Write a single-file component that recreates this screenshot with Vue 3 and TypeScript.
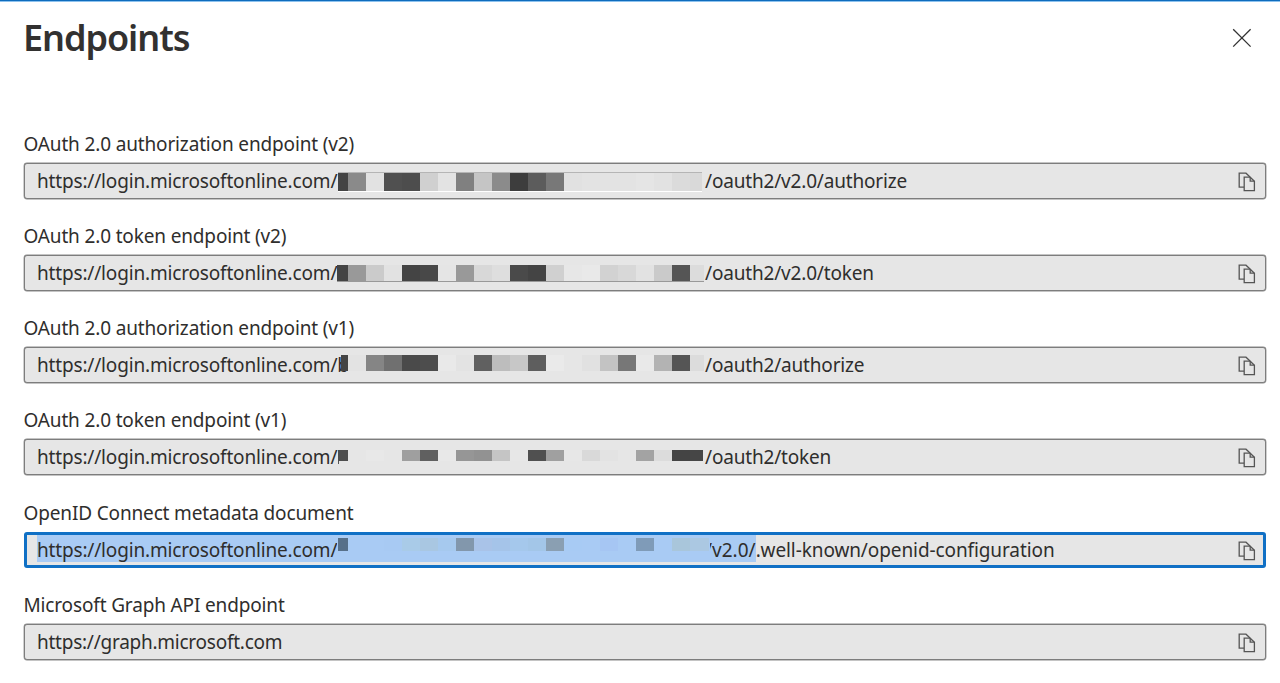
<script setup lang="ts">
interface Mosaic {
  first: number
  last: number
  top: number
  height: number
  gap: number
  tones: string[]
  edge?: string
}
interface Endpoint {
  label: string
  prefix: string
  suffix?: string
  selected?: string
  mosaic?: Mosaic
}

const host = 'https://login.microsoftonline.com/'

const greys = (list: string): string[] => list.split(' ').map((v) => '#' + v + v + v)

const endpoints: Endpoint[] = [
  {
    label: 'OAuth 2.0 authorization endpoint (v2)',
    prefix: host,
    suffix: '/oauth2/v2.0/authorize',
    mosaic: {
      first: 10, last: 12, top: 9, height: 18, gap: 1, edge: 'framed',
      tones: greys('44 8a e2 50 4d d0 e3 80 c5 8b 3d 5c 78 e1 e3 e3 e3 e5 e2 db d9'),
    },
  },
  {
    label: 'OAuth 2.0 token endpoint (v2)',
    prefix: host,
    suffix: '/oauth2/v2.0/token',
    mosaic: {
      first: 11, last: 14, top: 9, height: 16, gap: 0, edge: 'underlined',
      tones: greys('44 99 cb e2 44 48 e5 99 d8 de 4a 44 d0 e7 e9 d2 d8 e2 ca 55 dc'),
    },
  },
  {
    label: 'OAuth 2.0 authorization endpoint (v1)',
    prefix: host + 'b',
    suffix: '/oauth2/authorize',
    mosaic: {
      first: 7, last: 14, top: 7, height: 16, gap: 4,
      tones: greys('44 e3 85 70 4a 4d e9 e3 60 bd c7 5e ea e6 e1 c3 77 e9 b3 55 dc'),
    },
  },
  {
    label: 'OAuth 2.0 token endpoint (v1)',
    prefix: host,
    suffix: '/oauth2/token',
    mosaic: {
      first: 10, last: 13, top: 10, height: 11, gap: 1, edge: 'stemmed',
      tones: greys('4e e6 e8 e6 9f 60 e8 96 92 c5 e7 50 a0 e7 d9 e3 e6 a3 dc 44 46'),
    },
  },
  {
    label: 'OpenID Connect metadata document',
    prefix: host,
    selected: '/v2.0/',
    suffix: '.well-known/openid-configuration',
    mosaic: {
      first: 10, last: 19, top: 3, height: 13, gap: 1,
      tones: [
        '#577089', '#a9cbf4', '#a9cbf4', '#a8caf3', '#a9cbe8', '#a9c7e2', '#a6c9ee',
        '#8297ac', '#a9c3e8', '#a5c4e9', '#a5c8ec', '#a9cbf4', '#a3c6e8', '#8a9fb2',
        '#a8cbf4', '#a9cbf4', '#a6c6f3', '#a9cbf4', '#7f9bb8', '#a9cbf4', '#a9c6db',
        '#abc8e2',
      ].filter((_, i) => i !== 11),
    },
  },
  { label: 'Microsoft Graph API endpoint', prefix: 'https://graph.microsoft.com' },
]

function cellWidth(m: Mosaic, i: number): string {
  if (i === 0) return m.first + 'px'
  if (i === m.tones.length - 1) return m.last + 'px'
  return '18px'
}
</script>

<template>
  <main class="panel">
    <header class="head">
      <h1>Endpoints</h1>
      <button class="close" aria-label="Close">
        <svg width="20" height="20" viewBox="0 0 20 20"><path d="M1.2 1.2 18.6 18.6M18.6 1.2 1.2 18.6" /></svg>
      </button>
    </header>
    <section class="list">
      <div v-for="e in endpoints" :key="e.label" class="item">
        <div class="label">{{ e.label }}</div>
        <div class="field" :class="{ focused: e.selected }">
          <div class="value">
            <span class="prefix" :class="{ marked: e.selected, fixed: e.mosaic }">{{ e.prefix }}</span>
            <span v-if="e.mosaic" class="redacted" :class="{ marked: e.selected }">
              <span
                class="mosaic"
                :class="e.mosaic.edge"
                :style="{ marginTop: e.mosaic.top + 'px', marginLeft: e.mosaic.gap + 'px', height: e.mosaic.height + 'px' }"
              >
                <i
                  v-for="(t, i) in e.mosaic.tones"
                  :key="i"
                  :style="{ width: cellWidth(e.mosaic, i), background: t }"
                ></i>
              </span>
            </span>
            <span v-if="e.selected" class="marked version">{{ e.selected }}</span>
            <span class="suffix">{{ e.suffix }}</span>
          </div>
          <button class="copy" aria-label="Copy to clipboard">
            <svg width="18" height="20" viewBox="0 0 18 20">
              <path d="M6 15.2H1.2V1.2H8L12 5" />
              <path d="M6.2 5.2H12.2L16.4 9.2V18.6H6.2Z" />
              <path d="M12.2 5.2V9.2H16.4" />
            </svg>
          </button>
        </div>
      </div>
    </section>
  </main>
</template>

<style>
body {
  margin: 0;
  background: #fff;
}
</style>

<style scoped>
.panel {
  box-sizing: border-box;
  height: 683px;
  overflow: hidden;
  border-top: 1px solid #0f6cbd;
  box-shadow: inset 0 1px #8dc2ee;
  background: #fff;
  color: #2f2e2d;
  font-family: "Noto Sans", "Open Sans", sans-serif;
  font-size: 19px;
}
.head {
  display: flex;
  justify-content: space-between;
  box-sizing: border-box;
  height: 128.6px;
  padding: 12px 28px 0 23px;
}
h1 {
  margin: 0;
  font-size: 36px;
  font-weight: 600;
  line-height: 50px;
  letter-spacing: -1.05px;
  color: #323130;
}
button {
  border: 0;
  padding: 0;
  background: none;
}
svg {
  display: block;
  fill: none;
  stroke: #555;
  stroke-width: 1.3;
}
.close {
  align-self: flex-start;
  margin-top: 15px;
}
.close svg {
  stroke: #333;
}
.list {
  padding: 0 14px 0 24px;
}
.item {
  height: 92.25px;
}
.label {
  height: 33px;
  margin-left: -0.5px;
  line-height: 29px;
  letter-spacing: -0.15px;
  white-space: nowrap;
}
.field {
  display: flex;
  justify-content: space-between;
  box-sizing: border-box;
  width: 1242px;
  height: 36px;
  border: 1px solid #7d7d7d;
  border-radius: 3px;
  background: #e6e6e6;
  box-shadow: 0 0 0 0.4px #8a8a8a;
}
.focused {
  border: 3px solid #1070c5;
  box-shadow: none;
}
.value {
  display: flex;
  padding-left: 12px;
  line-height: 35px;
  white-space: pre;
}
.focused .value {
  padding-left: 10px;
  line-height: 31px;
}
.prefix {
  letter-spacing: -0.25px;
}
.fixed {
  width: 300px;
  letter-spacing: -0.17px;
}
.suffix {
  letter-spacing: -0.18px;
}
.focused .suffix {
  letter-spacing: -0.1px;
}
.marked {
  height: 27px;
  background: #a9cbf4;
}
.redacted {
  position: relative;
  width: 368px;
}
.redacted.marked {
  z-index: 1;
  width: 373px;
  margin-right: -5px;
}
.redacted.marked::before {
  content: "";
  position: absolute;
  left: 0;
  top: 0;
  width: 1px;
  height: 27px;
  background: #a9cbf4;
}
.mosaic {
  display: flex;
}
.mosaic i {
  flex: none;
  height: 100%;
}
.framed {
  width: 364px;
  box-shadow: 0 -1px #b5b5b5, 0 1px #fff;
}
.underlined {
  width: 367px;
  box-shadow: 0 1px #999;
}
.stemmed::before {
  content: "";
  width: 1px;
  height: 14px;
  margin-right: -1px;
  background: #555;
}
.copy {
  display: flex;
  align-items: center;
  margin: 2px 9px 0 0;
}
.focused .copy {
  margin-right: 7px;
}
</style>
